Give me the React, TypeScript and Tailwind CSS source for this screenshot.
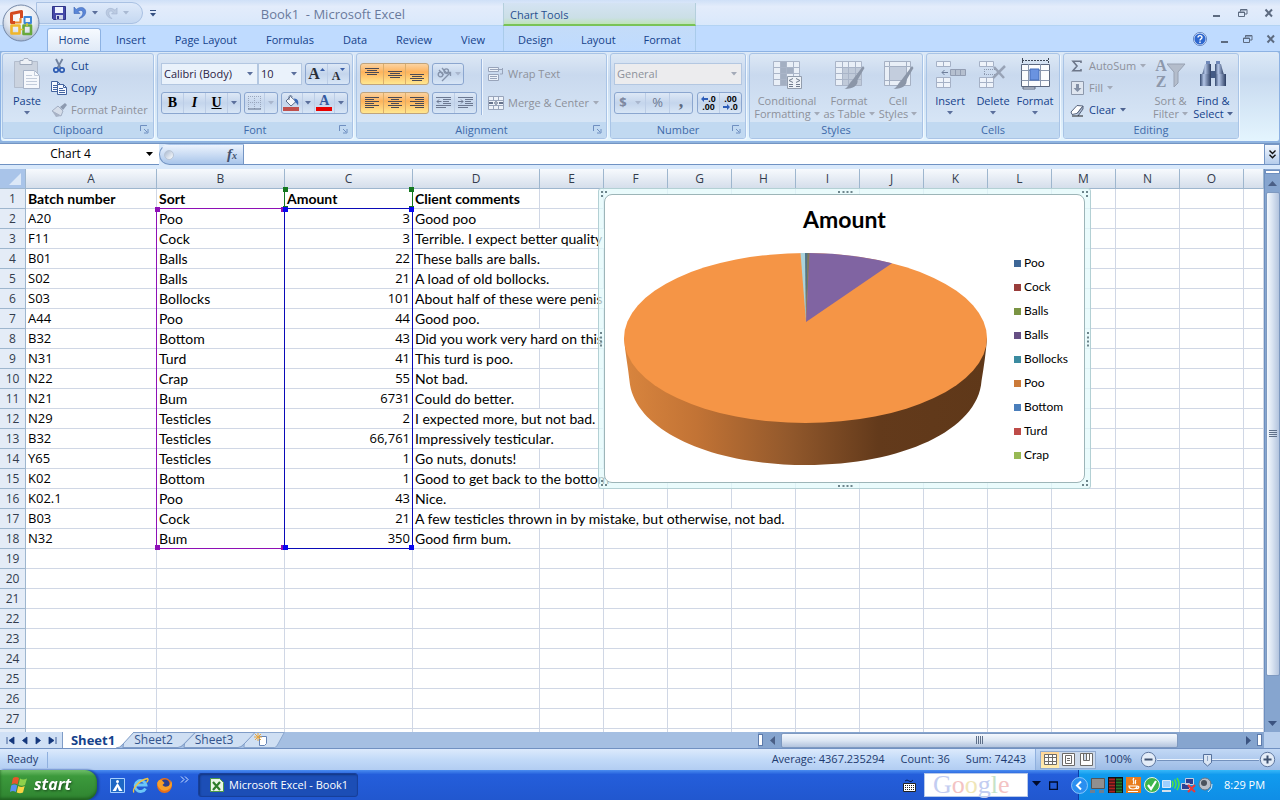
import type { ReactNode } from "react";

const ui = "font-['Open_Sans','Noto_Sans',sans-serif]";

const COLS = "ABCDEFGHIJKLMNO".split("");

type Row = [string, string, string, string, number];

// batch, sort, amount, comment, number of columns the comment spills over
const ROWS: Row[] = [
  ["A20", "Poo", "3", "Good poo", 1],
  ["F11", "Cock", "3", "Terrible. I expect better quality", 3],
  ["B01", "Balls", "22", "These balls are balls.", 2],
  ["S02", "Balls", "21", "A load of old bollocks.", 2],
  ["S03", "Bollocks", "101", "About half of these were penis", 3],
  ["A44", "Poo", "44", "Good poo.", 1],
  ["B32", "Bottom", "43", "Did you work very hard on this", 3],
  ["N31", "Turd", "41", "This turd is poo.", 1],
  ["N22", "Crap", "55", "Not bad.", 1],
  ["N21", "Bum", "6731", "Could do better.", 1],
  ["N29", "Testicles", "2", "I expected more, but not bad.", 2],
  ["B32", "Testicles", "66,761", "Impressively testicular.", 2],
  ["Y65", "Testicles", "1", "Go nuts, donuts!", 1],
  ["K02", "Bottom", "1", "Good to get back to the bottom", 3],
  ["K02.1", "Poo", "43", "Nice.", 1],
  ["B03", "Cock", "21", "A few testicles thrown in by mistake, but otherwise, not bad.", 5],
  ["N32", "Bum", "350", "Good firm bum.", 1],
];

const LEGEND: [string, string][] = [
  ["Poo", "bg-[#3d6696]"],
  ["Cock", "bg-[#993d3b]"],
  ["Balls", "bg-[#7a9443]"],
  ["Balls", "bg-[#664f84]"],
  ["Bollocks", "bg-[#3b8ba0]"],
  ["Poo", "bg-[#cb7a38]"],
  ["Bottom", "bg-[#4a7ebb]"],
  ["Turd", "bg-[#be4b48]"],
  ["Crap", "bg-[#98b954]"],
];

function Arrow({ className = "text-[#5b6f9c]" }: { className?: string }) {
  return (
    <svg width="6" height="4" viewBox="0 0 6 4" className={"shrink-0 " + className}>
      <path d="M0 0h6L3 3.6z" fill="currentColor" />
    </svg>
  );
}

function Launcher() {
  return (
    <button aria-label="More options" className="absolute right-1 top-[3px]">
      <svg width="9" height="9" viewBox="0 0 9 9" fill="none" stroke="#6f8fc0">
        <path d="M.5 6V.5H7M4 4l3 3M8 4v4H4" />
      </svg>
    </button>
  );
}

function Group({ title, width, launcher, children }: { title: string; width: string; launcher?: boolean; children: ReactNode }) {
  return (
    <section
      className={
        "flex h-[86px] shrink-0 flex-col overflow-hidden rounded-[3px] border border-[#a9c4e6] bg-linear-to-b from-[#dde8f5] via-[#c9d9ee] via-25% to-[#dbe9f8] shadow-[1px_1px_0_#f1f8ff] " +
        width
      }
    >
      <div className="flex min-h-0 flex-1">{children}</div>
      <div className="relative h-4 bg-[#c1d9f1] text-center leading-4 text-[#3e6aaa]">
        {title}
        {launcher && <Launcher />}
      </div>
    </section>
  );
}

function Big({ icon, lines, off, arrow, width }: { icon: ReactNode; lines: [string, string?]; off?: boolean; arrow?: boolean; width: string }) {
  return (
    <button className={"flex shrink-0 flex-col items-center whitespace-nowrap pt-1 leading-[13px] " + width + (off ? " text-[#8d919b]" : " text-[#15428b]")}>
      <span className="flex h-9 items-start">{icon}</span>
      <span>{lines[0]}</span>
      {lines[1] ? (
        <span className="flex items-center gap-[3px]">
          {lines[1]}
          <Arrow className={off ? "text-[#a3aab8]" : "text-[#4e6391]"} />
        </span>
      ) : (
        arrow && <span className="pt-1"><Arrow /></span>
      )}
    </button>
  );
}

function Small({ icon, text, off, arrow }: { icon: ReactNode; text: string; off?: boolean; arrow?: boolean }) {
  return (
    <button className={"flex h-[22px] items-center gap-1 whitespace-nowrap " + (off ? "text-[#8d919b]" : "text-[#15428b]")}>
      <span className="flex w-4 justify-center">{icon}</span>
      {text}
      {arrow && <Arrow className={off ? "text-[#a3aab8]" : "text-[#4e6391]"} />}
    </button>
  );
}

function Bar({ children, orange, width }: { children: ReactNode; orange?: boolean; width: string }) {
  return (
    <div
      className={
        "flex h-[22px] shrink-0 divide-x rounded-[3px] border " +
        width +
        (orange
          ? " divide-[#dcae6a] border-[#c0a47c] bg-linear-to-b from-[#fbd3a0] via-[#fdb35c] via-40% to-[#ffe78f]"
          : " divide-[#bccde6] border-[#8ba6cf] bg-linear-to-b from-[#dde8f6] via-[#c4d5ec] via-50% to-[#d8e6f6]")
      }
    >
      {children}
    </div>
  );
}

function Cell({ label, children, className = "flex-1" }: { label: string; children: ReactNode; className?: string }) {
  return (
    <button aria-label={label} className={"flex items-center justify-center " + className}>
      {children}
    </button>
  );
}

function Lines({ d, color = "#4a4a55" }: { d: string; color?: string }) {
  return (
    <svg width="16" height="16" viewBox="0 0 16 16" stroke={color} fill="none">
      <path d={d} />
    </svg>
  );
}

const ALIGN: [string, string][] = [
  ["Top align", "M1 2.5h14M3 4.5h10M1 6.5h14M3 8.5h10"],
  ["Middle align", "M1 5.5h14M3 7.5h10M1 9.5h14M3 11.5h10"],
  ["Bottom align", "M1 8.5h14M3 10.5h10M1 12.5h14M3 14.5h10"],
];
const HALIGN: [string, string][] = [
  ["Align left", "M1 2.5h14M1 4.5h9M1 6.5h14M1 8.5h9M1 10.5h14M1 12.5h9"],
  ["Center", "M1 2.5h14M4 4.5h8M1 6.5h14M4 8.5h8M1 10.5h14M4 12.5h8"],
  ["Align right", "M1 2.5h14M6 4.5h9M1 6.5h14M6 8.5h9M1 10.5h14M6 12.5h9"],
];

function OfficeLogo() {
  return (
    <svg width="38" height="38" viewBox="0 0 38 38">
      <defs>
        <radialGradient id="orb" cx="50%" cy="30%" r="70%">
          <stop offset="0" stopColor="#ffffff" />
          <stop offset=".6" stopColor="#e4e9f1" />
          <stop offset="1" stopColor="#a9b8cf" />
        </radialGradient>
      </defs>
      <circle cx="19" cy="19" r="18" fill="url(#orb)" stroke="#7488a8" />
      <g fill="none" strokeWidth="2.6" strokeLinejoin="round">
        <path d="M13 18.500H9.500V9.500L19.500 7.500V14" stroke="#d4491f" strokeWidth="3" />
        <path d="M13 18.500h5.500V14" stroke="#ee8b2a" strokeWidth="2.200" />
        <path d="M22.500 13h6.500v6h-6.500z" stroke="#3f86d6" strokeWidth="2" />
        <path d="M9.500 21.500h8v8h-8z" stroke="#f0b62b" strokeWidth="2.600" />
        <path d="M21.500 21.500h7.500v8.500h-7.500z" stroke="#67a83c" strokeWidth="2.600" />
        <path d="M17.500 25.500h4M25 19v3" stroke="#d8c23b" strokeWidth="1.600" />
      </g>
    </svg>
  );
}

function WinButtons({ help }: { help?: boolean }) {
  return (
    <div className={"ml-auto flex items-center text-[#5d6b80] " + (help ? "gap-[13px] self-center pr-1" : "gap-[16px] pr-[6px]")}>
      {help && (
        <button aria-label="Help">
          <svg width="14" height="14" viewBox="0 0 14 14">
            <circle cx="7" cy="7" r="6.300" fill="#2f68cf" stroke="#dbe8fb" strokeWidth="1.400" />
            <circle cx="7" cy="7" r="6.600" fill="none" stroke="#3b64ad" strokeWidth=".7" />
            <path d="M5 5.500c0-2.500 4-2.500 4 0C9 7 7 6.800 7 8.400M7 9.600v1.300" stroke="#fff" strokeWidth="1.400" fill="none" />
          </svg>
        </button>
      )}
      <button aria-label="Minimize">
        <svg width="10" height="10" viewBox="0 0 10 10"><path d="M1 8h7" stroke="currentColor" strokeWidth="2" /></svg>
      </button>
      <button aria-label="Restore">
        <svg width="10" height="10" viewBox="0 0 10 10" fill="none" stroke="currentColor">
          <path d="M.5 4h6v4.500h-6zM2.500 3.500v-2h6.500v4.500H7M.5 4.500h6M2.500 2h6" />
        </svg>
      </button>
      <button aria-label="Close">
        <svg width="10" height="10" viewBox="0 0 10 10"><path d="M1.500 1.500l6.500 7M8 1.500l-6.500 7" stroke="currentColor" strokeWidth="2" /></svg>
      </button>
    </div>
  );
}

function TitleBar() {
  return (
    <header className="relative flex h-[26px] shrink-0 bg-linear-to-b from-[#cfe0f7] via-[#e3ecfb] via-25% to-[#d9e8fb] shadow-[inset_0_-1px_0_#b3d3f3]">
      <div className="flex w-[503px] shrink-0 items-center">
        <div className="ml-9 flex h-[22px] w-[107px] items-center gap-[7px] rounded-r-full border border-[#a9c1e3] bg-linear-to-b from-[#dfeafa] to-[#c5d8f1] pl-[15px]">
          <button aria-label="Save">
            <svg width="14" height="14" viewBox="0 0 14 14">
              <path d="M.5.5h13v13h-12l-1-1z" fill="#4549a8" stroke="#2f3488" />
              <path d="M3 1h8v6H3z" fill="#eef3ff" />
              <path d="M4 9h7v4.500H4z" fill="#cfd6ea" />
              <path d="M5 10h2v3H5z" fill="#2f3488" />
            </svg>
          </button>
          <button aria-label="Undo" className="flex items-center gap-[5px]">
            <svg width="14" height="14" viewBox="0 0 14 14">
              <path d="M1 1v6.500h6L5 5.500c3-2.500 6-.5 4.500 3-.5 1.500-2 2.800-3.500 4 4.500-.8 7.500-4.500 6.500-8C11.500.8 6.500.5 3.200 3.500z" fill="#5a86d8" stroke="#3c64b4" strokeWidth=".6" />
            </svg>
            <Arrow />
          </button>
          <button aria-label="Redo" className="flex items-center gap-[5px]">
            <svg width="13" height="13" viewBox="0 0 14 14">
              <path d="M13 1v6.500H7L9 5.500c-3-2.500-6-.5-4.500 3 .5 1.500 1.500 2.800 3 4C3 11.700.5 8 1.500 4.500 2.500.8 7.500.5 10.800 3.500z" fill="#bccbe2" stroke="#9fb2cf" strokeWidth=".6" />
            </svg>
            <Arrow className="text-[#a9b9d2]" />
          </button>
        </div>
        <button aria-label="Customize Quick Access Toolbar" className="ml-[7px]">
          <svg width="6" height="7" viewBox="0 0 6 7"><path d="M0 .5h6" stroke="#344f80" /><path d="M0 3h6L3 6.500z" fill="#344f80" /></svg>
        </button>
        <h1 className="ml-auto mr-[98px] mt-1 text-[13px] text-[#6a7a9c]">Book1&nbsp; - Microsoft Excel</h1>
      </div>
      <div className="mt-[3px] w-[193px] shrink-0 border-x border-b-2 border-x-[#b4cfdc] border-b-[#79c356] bg-linear-to-b from-[#d4e3f3] via-[#cbdfe6] via-70% to-[#bfe3b8] pl-[6px] pt-1 text-[#27508f]">
        Chart Tools
      </div>
      <WinButtons />
      <button aria-label="Office Button" className="absolute left-[2px] top-1 z-10"><OfficeLogo /></button>
    </header>
  );
}

function Tabs() {
  const tab = "flex h-[22px] items-center whitespace-nowrap px-[14px] text-[#15428b]";
  return (
    <nav className="flex h-[25px] shrink-0 items-end bg-[#bfdbff]">
      <div className="flex w-[503px] shrink-0 items-end gap-px pl-[47px]">
        <button className="flex h-[23px] w-[54px] items-center justify-center rounded-t-[3px] border border-b-0 border-[#8db2e3] bg-linear-to-b from-[#f6faff] to-[#e0eaf7] text-[#15428b]">Home</button>
        {["Insert", "Page Layout", "Formulas", "Data", "Review", "View"].map((t) => (
          <button key={t} className={tab}>{t}</button>
        ))}
      </div>
      <div className="flex h-full w-[193px] shrink-0 items-end border-x border-[#a9cbea] bg-linear-to-b from-[#c4dcf8] to-[#bfdbff]">
        {["Design", "Layout", "Format"].map((t) => (
          <button key={t} className={tab}>{t}</button>
        ))}
      </div>
      <WinButtons help />
    </nav>
  );
}

function Combo({ label, value, width, off }: { label: string; value: string; width: string; off?: boolean }) {
  return (
    <label className={"relative flex h-[22px] shrink-0 " + width}>
      <select
        aria-label={label}
        className={"w-full appearance-none rounded-none border border-[#b3c7e1] pl-[2px] " + (off ? "bg-[#ececee] text-[#8d919b]" : "bg-[#eaf2fb] text-[#2a2344]")}
      >
        <option>{value}</option>
      </select>
      <span className="pointer-events-none absolute right-[5px] top-[9px]"><Arrow className={off ? "text-[#a3aab8]" : "text-[#5b6f9c]"} /></span>
    </label>
  );
}

function TableIcon({ kind }: { kind: "cond" | "table" | "style" }) {
  return (
    <svg width="32" height="32" viewBox="0 0 32 32">
      {kind === "style" ? (
        <g>
          <path d="M2.500 3.500h26v24h-26z" fill="#e9eff7" stroke="#a5b0c3" />
          <path d="M7.500 8.500h17v14h-17z" fill="#c3cddd" stroke="#a5b0c3" />
          <path d="M7.500 3v5M24.500 3v5M7.500 22v5M2 8.500h5M2 22.500h5M24 8.500h5" stroke="#a5b0c3" />
        </g>
      ) : (
        <g>
          <path d="M2.500 3.500h26v24h-26z" fill="#e9eff7" />
          <path d={kind === "cond" ? "M9 3h6v24H9zM15 9h7v6h-7z" : "M9 9h20v19H9z"} fill={kind === "cond" ? "#a3afc2" : "#c0cad9"} />
          <path d="M2.500 3.500h26v24h-26zM2.500 9.500h26M2.500 15.500h26M2.500 21.500h26M9.500 3.500v24M15.500 3.500v24M22.500 3.500v24" stroke="#aab5c8" fill="none" />
        </g>
      )}
      {kind === "cond" ? (
        <g>
          <path d="M16.500 18.500h14v12h-14z" fill="#eef2f7" stroke="#929dad" />
          <path d="M22 20.500l-4 2 4 2M18 26.500h4M18 28.500h4M25 20.500l4 2-4 2M25 26.500h4M25 28.500h4" stroke="#707b8c" fill="none" />
        </g>
      ) : (
        <path d="M30 8l1.500 2-7 12c1 5-4 9-13 9 4-2 4-5 8-9z" fill="#8b96a8" />
      )}
    </svg>
  );
}

function CellsIcon({ kind }: { kind: "insert" | "delete" | "format" }) {
  if (kind === "format")
    return (
      <svg width="32" height="32" viewBox="0 0 32 32">
        <path d="M3 2.500h26M3.500 0v5M29.500 0v5" stroke="#3d4656" strokeDasharray="2 1" />
        <path d="M2.500 6.500h28v22h-28z" fill="#fbfcfe" stroke="#5c6880" />
        <path d="M2.500 12.500h28M2.500 22.500h28M9.500 6v22M21.500 6v22" stroke="#8a97ae" />
        <path d="M11 11h9v11h-9z" fill="#6a93e0" stroke="#456db8" />
        <path d="M4 29h12v2H4z" fill="#dfe5ef" stroke="#5c6880" />
      </svg>
    );
  return (
    <svg width="32" height="32" viewBox="0 0 32 32">
      <path d="M2.500 3.500h14v5h-14zM9.500 3.500v5M2.500 19.500h14v10h-14zM9.500 19.500v10M2.500 24.500h14" fill="#eef3fa" stroke="#a5b1c6" />
      {kind === "insert" ? (
        <g>
          <path d="M16.500 11.500h15v6h-15zM21.500 11.500v6M26.500 11.500v6" fill="#b5bfcf" stroke="#929db2" />
          <path d="M14 14.500H8M10.500 12L8 14.500l2.500 2.500" stroke="#6f7f9b" fill="none" />
        </g>
      ) : (
        <g>
          <path d="M7 11.500h14M7 16.500h14M7.500 11v6" stroke="#8c98ae" strokeDasharray="1 1" />
          <path d="M17 9l10 11M28 8L16 20" stroke="#98a3b6" strokeWidth="2.500" />
        </g>
      )}
    </svg>
  );
}

function Ribbon() {
  return (
    <div className="h-[92px] shrink-0 bg-[#8fb4dd] pb-px">
      <div className="flex h-[91px] gap-[3px] overflow-hidden rounded-[3px] border border-[#8db2e3] bg-linear-to-b from-[#dce9f7] via-[#c9dbf0] via-30% to-[#e4f5fe] pl-px pt-px">
        <Group title="Clipboard" width="w-[152px]" launcher>
          <Big
            width="w-12"
            arrow
            lines={["Paste"]}
            icon={
              <svg width="28" height="32" viewBox="0 0 28 32">
                <path d="M1.500 3.500h23v26h-23z" fill="#cbd3df" stroke="#b3bdcd" />
                <path d="M7 2.500h3c0-3 6-3 6 0h3v4H7z" fill="#eef1f6" stroke="#9faabc" />
                <path d="M10.500 12.500h11l5 5v13h-16z" fill="#f6f8fc" stroke="#a7b3c8" />
                <path d="M21.500 12.500v5h5M13 17.500h6M13 20.500h11M13 23.500h11M13 26.500h11" stroke="#c3ccdb" fill="none" />
              </svg>
            }
          />
          <div className="flex flex-col pt-px">
            <Small
              text="Cut"
              icon={
                <svg width="14" height="16" viewBox="0 0 14 16" fill="none">
                  <path d="M4 1l4.500 9M10.500 1L5.500 10" stroke="#72839f" strokeWidth="1.800" />
                  <circle cx="4" cy="12" r="2.200" stroke="#2f5db3" strokeWidth="1.700" />
                  <circle cx="10" cy="12" r="2.200" stroke="#2f5db3" strokeWidth="1.700" />
                </svg>
              }
            />
            <Small
              text="Copy"
              icon={
                <svg width="16" height="14" viewBox="0 0 16 14" stroke="#43639f">
                  <path d="M.5.5h6l3 3v7h-9zM6.500.5v3h3M2 4.500h4M2 6.500h4M2 8.500h4" fill="#f5f9ff" />
                  <path d="M6.500 3.500h6l3 3v7h-9z" fill="#f5f9ff" />
                  <path d="M12.500 3.500v3h3M8 7.500h4M8 9.500h6M8 11.500h6" fill="none" />
                </svg>
              }
            />
            <Small
              off
              text="Format Painter"
              icon={
                <svg width="16" height="14" viewBox="0 0 16 14">
                  <path d="M14 0l2 2-4 5-3-3z" fill="#8d9ab0" />
                  <path d="M7 3l5 5-2 5L1 8z" fill="#d5dde9" stroke="#a2aec2" />
                  <path d="M1 8l9 5-5 1z" fill="#a7b2c5" />
                </svg>
              }
            />
          </div>
        </Group>

        <Group title="Font" width="w-[196px]" launcher>
          <div className="flex flex-col gap-[7px] pl-[3px] pt-[9px]">
            <div className="flex">
              <Combo label="Font" value="Calibri (Body)" width="w-[97px]" />
              <Combo label="Font size" value="10" width="w-[44px]" />
              <div className="w-[3px]" />
              <Bar width="w-[45px]">
                <Cell label="Grow font"><span className="font-['Liberation_Serif',serif] text-base font-bold leading-4 text-[#2b2f38]">A</span><svg width="5" height="12" viewBox="0 0 5 12"><path d="M0 3h5L2.500 0z" fill="#3c60a8" /></svg></Cell>
                <Cell label="Shrink font"><span className="pt-1 font-['Liberation_Serif',serif] text-xs font-bold leading-3 text-[#2b2f38]">A</span><svg width="5" height="12" viewBox="0 0 5 12"><path d="M0 0h5L2.500 3z" fill="#3c60a8" /></svg></Cell>
              </Bar>
            </div>
            <div className="flex gap-[3px]">
              <Bar width="w-20">
                <Cell label="Bold"><span className="font-['Liberation_Serif',serif] text-sm font-black text-black">B</span></Cell>
                <Cell label="Italic"><span className="font-['Liberation_Serif',serif] text-sm font-bold italic text-black">I</span></Cell>
                <Cell label="Underline"><span className="font-['Liberation_Serif',serif] text-sm font-bold text-black underline">U</span></Cell>
                <Cell label="Underline options" className="w-3"><Arrow /></Cell>
              </Bar>
              <Bar width="w-[34px]">
                <Cell label="Borders">
                  <svg width="14" height="14" viewBox="0 0 14 14"><path d="M.5 0v13M6.500 0v13M12.500 0v13M0 .5h13M0 6.500h13" stroke="#9aa7bd" strokeDasharray="1 1" /><path d="M0 13h13" stroke="#5f6d86" /></svg>
                </Cell>
                <Cell label="Border options" className="w-3"><Arrow className="text-[#a9b6cd]" /></Cell>
              </Bar>
              <Bar width="w-[67px]">
                <Cell label="Fill color">
                  <svg width="17" height="16" viewBox="0 0 17 16"><path d="M0 12h16v4H0z" fill="#c0504d" /><path d="M7.500 1.500l5.500 5-5 4.500-5-5z" fill="#f4f7fb" stroke="#5f6f8c" /><path d="M6 5V2c0-2 3-2 3 0" stroke="#5f6f8c" fill="none" /><path d="M11 3.500c4 0 5 3 4 7-1-2-2-3-3-3.500z" fill="#3a68b8" /></svg>
                </Cell>
                <Cell label="Fill options" className="w-3"><Arrow /></Cell>
                <Cell label="Font color" className="flex-1 flex-col">
                  <span className="font-['Liberation_Serif',serif] text-sm font-bold leading-3 text-[#33599f]">A</span>
                  <span className="h-1 w-4 bg-[#e80000]" />
                </Cell>
                <Cell label="Font color options" className="w-3"><Arrow /></Cell>
              </Bar>
            </div>
          </div>
        </Group>

        <Group title="Alignment" width="w-[251px]" launcher>
          <div className="flex flex-col gap-[7px] pl-[3px] pt-[9px]">
            <div className="flex gap-[3px]">
              <Bar orange width="w-[69px]">
                {ALIGN.map(([l, d]) => <Cell key={l} label={l}><Lines d={d} /></Cell>)}
              </Bar>
              <Bar width="w-8">
                <Cell label="Orientation" className="flex-1 gap-[2px]">
                  <svg width="17" height="16" viewBox="0 0 17 16" stroke="#8492aa" fill="none" strokeWidth="1.300"><circle cx="4.500" cy="8.500" r="2.300" /><path d="M3 4l4.500 5M6 2l5.500 6" /><circle cx="10.300" cy="5" r="2.200" /><path d="M6 15l8-8M14.500 10V6.500H11" /></svg>
                  <Arrow className="text-[#a9b6cd]" />
                </Cell>
              </Bar>
            </div>
            <div className="flex gap-[3px]">
              <Bar orange width="w-[69px]">
                {HALIGN.map(([l, d]) => <Cell key={l} label={l}><Lines d={d} /></Cell>)}
              </Bar>
              <Bar width="w-[45px]">
                <Cell label="Decrease indent"><Lines color="#6c7891" d="M0 2.500h15M7 4.500h8M7 6.500h6M7 8.500h8M0 10.500h15M0 12.500h10M5.500 6.500H1M3 4.500l-2 2 2 2" /></Cell>
                <Cell label="Increase indent"><Lines color="#6c7891" d="M0 2.500h15M7 4.500h8M7 6.500h6M7 8.500h8M0 10.500h15M0 12.500h10M0 6.500h5M3 4.500l2 2-2 2" /></Cell>
              </Bar>
            </div>
          </div>
          <div className="ml-1 mt-[5px] h-14 w-px bg-[#9ab5dc] shadow-[1px_0_0_#eef5fd]" />
          <div className="flex flex-col gap-[7px] pl-[6px] pt-[9px]">
            <Small off text="Wrap Text" icon={<svg width="16" height="16" viewBox="0 0 16 16" stroke="#98a4ba" fill="none"><path d="M.5 1.500h10v4H.5zM.5 8.500h10v6H.5z" fill="#edf2f9" /><path d="M2 3.500h12M2 10.500h7M2 12.500h7M14.500 2v6H12" /></svg>} />
            <Small off arrow text="Merge & Center" icon={<svg width="16" height="16" viewBox="0 0 16 16" stroke="#98a4ba" fill="none"><path d="M.5 1.500h15v13H.5zM.5 5.500h15M.5 10.500h15M5.500 1.500v4M10.500 1.500v4M5.500 10.500v4M10.500 10.500v4" fill="#edf2f9" /><path d="M1 8h4M11 8h4" stroke="#66738c" strokeWidth="2" /><circle cx="8" cy="8" r="1.300" stroke="#66738c" /></svg>} />
          </div>
        </Group>

        <Group title="Number" width="w-[136px]" launcher>
          <div className="flex flex-col gap-[7px] pl-[3px] pt-[9px]">
            <Combo off label="Number format" value="General" width="w-[128px]" />
            <div className="flex gap-1">
              <Bar width="w-[79px]">
                <Cell label="Accounting format" className="flex-1 gap-2"><span className="text-[13px] font-bold text-[#7d88a0]">$</span><Arrow className="text-[#a9b6cd]" /></Cell>
                <Cell label="Percent" className="w-6"><span className="text-[13px] text-[#6d7890]">%</span></Cell>
                <Cell label="Comma" className="w-[22px]"><span className="pb-1 font-['Liberation_Serif',serif] text-lg font-bold leading-3 text-[#5e6980]">,</span></Cell>
              </Bar>
              <Bar width="w-[45px]">
                <Cell label="Increase decimal" className="flex-1 flex-col font-['Liberation_Sans',sans-serif] text-[9px] font-bold leading-[8px] text-black"><span className="flex items-center"><svg width="7" height="6" viewBox="0 0 7 6"><path d="M0 3l3-3v2h4v2H3v2z" fill="#2c5cb8" /></svg>.0</span><span>.00</span></Cell>
                <Cell label="Decrease decimal" className="flex-1 flex-col font-['Liberation_Sans',sans-serif] text-[9px] font-bold leading-[8px] text-black"><span>.00</span><span className="flex items-center"><svg width="7" height="6" viewBox="0 0 7 6"><path d="M7 3L4 0v2H0v2h4v2z" fill="#2c5cb8" /></svg>.0</span></Cell>
              </Bar>
            </div>
          </div>
        </Group>

        <Group title="Styles" width="w-[174px]">
          <Big off width="w-[74px]" lines={["Conditional", "Formatting"]} icon={<TableIcon kind="cond" />} />
          <Big off width="w-[50px]" lines={["Format", "as Table"]} icon={<TableIcon kind="table" />} />
          <Big off width="w-[48px]" lines={["Cell", "Styles"]} icon={<TableIcon kind="style" />} />
        </Group>

        <Group title="Cells" width="w-[134px]">
          <Big width="w-[46px]" arrow lines={["Insert"]} icon={<CellsIcon kind="insert" />} />
          <Big width="w-[40px]" arrow lines={["Delete"]} icon={<CellsIcon kind="delete" />} />
          <Big width="w-[44px]" arrow lines={["Format"]} icon={<CellsIcon kind="format" />} />
        </Group>

        <Group title="Editing" width="w-[176px]">
          <div className="flex w-[84px] flex-col pl-[5px] pt-px">
            <Small off arrow text="AutoSum" icon={<svg width="12" height="12" viewBox="0 0 12 12" fill="none" stroke="#6c7689" strokeWidth="1.600"><path d="M10 3V1.300H2L6 6l-4 4.700h8V9" /></svg>} />
            <Small off arrow text="Fill" icon={<svg width="13" height="14" viewBox="0 0 13 14"><path d="M.5.5h12v13H.5z" fill="#dfe6f0" stroke="#8c98ac" /><path d="M5 3h3v4h2.500l-4 4-4-4H5z" fill="#8390a6" /></svg>} />
            <Small arrow text="Clear" icon={<svg width="15" height="13" viewBox="0 0 15 13"><path d="M1 8l6-6.500 6 .5-6 7.500-5 1z" fill="#fff" stroke="#56637c" /><path d="M7 9.500L13 2v3l-5 7" fill="#aebbd0" stroke="#56637c" /><path d="M2 12h11" stroke="#222" /></svg>} />
          </div>
          <Big
            off
            width="w-[45px]"
            lines={["Sort &", "Filter"]}
            icon={
              <span className="flex">
                <span className="flex flex-col font-['Liberation_Serif',serif] text-base font-bold leading-4 text-[#8d98ab]">
                  <span>A</span>
                  <span>Z</span>
                </span>
                <svg width="19" height="32" viewBox="0 0 19 32">
                  <path d="M0 6h18l-7 8v11l-4 4V14z" fill="#b4bdcb" stroke="#98a2b3" />
                </svg>
              </span>
            }
          />
          <Big
            width="w-[40px]"
            lines={["Find &", "Select"]}
            icon={
              <svg width="30" height="32" viewBox="0 0 30 32">
                <defs>
                  <linearGradient id="bino" x1="0" x2="1"><stop offset="0" stopColor="#34496f" /><stop offset=".35" stopColor="#b3c5e6" /><stop offset="1" stopColor="#2b3d61" /></linearGradient>
                </defs>
                <path d="M7 6h6v11H4l2-7z" fill="url(#bino)" />
                <path d="M17 6h6l1 4 2 7h-9z" fill="url(#bino)" />
                <path d="M2 16h11v12H2z" fill="url(#bino)" />
                <path d="M17 16h11v12H17z" fill="url(#bino)" />
                <path d="M13 13h4v7h-4z" fill="#435a84" />
                <path d="M8 3h4v3H8zM18 3h4v3h-4z" fill="#6f88b8" />
              </svg>
            }
          />
        </Group>
      </div>
    </div>
  );
}

function FormulaBar() {
  return (
    <div className="flex h-[26px] shrink-0 border-t border-[#7495c4] bg-[#d9e9fb] pb-1">
      <div className="flex w-[159px] shrink-0 items-center border-b border-[#6f92c3] bg-white">
        <input aria-label="Name box" defaultValue="Chart 4" className="w-[141px] bg-transparent text-center text-xs text-black outline-none" />
        <button aria-label="Name list" className="flex w-4 justify-center"><svg width="7" height="4" viewBox="0 0 7 4"><path d="M0 0h7L3.500 4z" fill="#000" /></svg></button>
      </div>
      <div className="flex w-[85px] shrink-0 items-center justify-between rounded-l-full border border-[#7495c4] border-t-transparent bg-linear-to-b from-[#edf4fd] to-[#a9c5ea] pl-1 pr-[6px]">
        <span className="size-[10px] rounded-full border border-[#b9c5d6] bg-linear-to-br from-[#a9b9d0] to-white" />
        <button aria-label="Insert function" className="font-['Liberation_Serif',serif] text-[15px] font-bold italic leading-4 text-[#44536f]">f<span className="text-[10px]">x</span></button>
      </div>
      <input aria-label="Formula" className="min-w-0 flex-1 border-b border-[#6f92c3] bg-white outline-none" />
      <button aria-label="Expand formula bar" className="flex w-4 items-center justify-center border border-[#7495c4] bg-linear-to-b from-[#f2f7fe] to-[#b5cdec]">
        <svg width="7" height="9" viewBox="0 0 7 9" fill="none" stroke="#111" strokeWidth="1.400"><path d="M.5.500l3 3 3-3M.5 4.700l3 3 3-3" /></svg>
      </button>
    </div>
  );
}

function Pie() {
  return (
    <svg width="372" height="220" viewBox="620 250 372 220" className="shrink-0">
      <defs>
        <linearGradient id="side" gradientUnits="userSpaceOnUse" x1="624" x2="987" y1="0" y2="0">
          <stop offset="0" stopColor="#d9853e" />
          <stop offset=".2" stopColor="#c27335" />
          <stop offset=".45" stopColor="#93592c" />
          <stop offset=".7" stopColor="#633a1b" />
          <stop offset="1" stopColor="#5f3819" />
        </linearGradient>
      </defs>
      <path d="M624 338 C625 352 628 366 629.500 381 C634 430 710 465 806 465 C902 465 978 430 981.500 381 C984 366 986 352 987 338z" fill="url(#side)" />
      <ellipse cx="805.5" cy="338" rx="181.500" ry="85" fill="#f59546" />
      <path d="M806 322L800.500 253H805.500z" fill="#a9d3dc" />
      <path d="M806 322L805 253H808z" fill="#4f7488" />
      <path d="M806 322L807.500 253H810z" fill="#7c7a5c" />
      <path d="M806 322L809.500 253A181.500 85 0 0 1 892 263.200z" fill="#8064a2" />
    </svg>
  );
}

function Dots({ className }: { className: string }) {
  return <span className={"absolute border-dotted border-[#6d858c] " + className} />;
}

function Chart() {
  return (
    <figure className="absolute left-[598px] top-[19px] h-[301px] w-[493px] rounded-[3px] border border-[#b3d0d4] bg-[#e3fafb]/75 p-[5px]">
      <div className="flex h-full flex-col rounded-lg border border-[#9db5b8] bg-white font-['Lato','Noto_Sans',sans-serif] text-black">
        <figcaption className="pt-2 text-center text-[23px] font-bold leading-8">Amount</figcaption>
        <div className="flex pl-[15px] pt-[15px]">
          <Pie />
          <ul className="flex flex-col pl-[22px] pt-px text-xs leading-6">
            {LEGEND.map(([name, color], i) => (
              <li key={i} className="flex items-center gap-[3px]">
                <span className={"size-[7px] " + color} />
                {name}
              </li>
            ))}
          </ul>
        </div>
      </div>
      <Dots className="left-1/2 top-[2px] w-[15px] -translate-x-1/2 border-t-2" />
      <Dots className="bottom-[1px] left-1/2 w-[15px] -translate-x-1/2 border-t-2" />
      <Dots className="left-[1px] top-1/2 h-[15px] -translate-y-1/2 border-l-2" />
      <Dots className="right-[1px] top-1/2 h-[15px] -translate-y-1/2 border-l-2" />
      <Dots className="left-[2px] top-[2px] size-[6px] border-l-2 border-t-2" />
      <Dots className="right-[2px] top-[2px] size-[6px] border-r-2 border-t-2" />
      <Dots className="bottom-[2px] left-[2px] size-[6px] border-b-2 border-l-2" />
      <Dots className="bottom-[2px] right-[2px] size-[6px] border-b-2 border-r-2" />
    </figure>
  );
}

function RangeBox({ className, handle }: { className: string; handle: string }) {
  const h = "absolute size-[5px] " + handle;
  return (
    <div className={"pointer-events-none absolute " + className}>
      <span className={h + " -left-[2px] -top-[2px]"} />
      <span className={h + " -right-[2px] -top-[2px]"} />
      <span className={h + " -bottom-[2px] -left-[2px]"} />
      <span className={h + " -bottom-[2px] -right-[2px]"} />
    </div>
  );
}

function Sheet() {
  const td = "h-5 whitespace-nowrap border-b border-r border-[#d0d7e5] p-0 pl-[2px] leading-[19px]";
  const num = "font-['Open_Sans','Noto_Sans',sans-serif] text-[13px]";
  const rowHead = "h-5 border-b border-r border-[#9eb6ce] bg-[#e4ecf7] p-0 text-xs font-normal leading-[19px] text-[#333c4d] font-['Open_Sans','Noto_Sans',sans-serif]";
  const colHead = "h-5 border-b border-r border-[#9eb6ce] bg-linear-to-b from-[#f7fafd] to-[#d5deeb] p-0 text-xs font-normal leading-[19px] text-[#333c4d] font-['Open_Sans','Noto_Sans',sans-serif]";
  return (
    <main className="relative min-w-0 flex-1 overflow-hidden bg-white">
      <table className="w-full table-fixed border-separate border-spacing-0 font-['Lato','Noto_Sans',sans-serif] text-sm text-black">
        <colgroup>
          <col className="w-[26px]" />
          <col className="w-[131px]" />
          <col className="w-[128px]" />
          <col className="w-[128px]" />
          <col className="w-[127px]" />
          {COLS.slice(4).map((c) => <col key={c} className="w-16" />)}
          <col />
        </colgroup>
        <thead>
          <tr>
            <td className="h-5 border-b border-r border-[#9eb6ce] bg-[#a9c4e9] p-0">
              <svg width="25" height="19" viewBox="0 0 25 19" className="block"><path d="M21 4v12H9z" fill="#dce8f7" /></svg>
            </td>
            {COLS.map((c) => <th key={c} scope="col" className={colHead}>{c}</th>)}
            <td className={colHead} />
          </tr>
        </thead>
        <tbody>
          <tr>
            <th scope="row" className={rowHead}>1</th>
            {["Batch number", "Sort", "Amount", "Client comments"].map((c) => <td key={c} className={td + " font-bold"}>{c}</td>)}
            {COLS.slice(3).map((c) => <td key={c} className={td} />)}
          </tr>
          {ROWS.map(([a, b, c, d, span], i) => (
            <tr key={i}>
              <th scope="row" className={rowHead}>{i + 2}</th>
              <td className={td + " " + num}>{a}</td>
              <td className={td}>{b}</td>
              <td className={td + " pr-[2px] text-right " + num}>{c}</td>
              <td colSpan={span} className={td}>{d}</td>
              {COLS.slice(2 + span).map((k) => <td key={k} className={td} />)}
            </tr>
          ))}
          {Array.from({ length: 9 }, (_, i) => (
            <tr key={i}>
              <th scope="row" className={rowHead}>{i + 19}</th>
              {COLS.map((k) => <td key={k} className={td} />)}
              <td className={td} />
            </tr>
          ))}
          <tr>
            <td className={rowHead} />
            {COLS.map((k) => <td key={k} className={td} />)}
            <td className={td} />
          </tr>
        </tbody>
      </table>
      <RangeBox className="left-[284px] top-[20px] h-5 w-[129px] border-x border-[#14781f]" handle="bg-[#14781f]" />
      <RangeBox className="left-[156px] top-[39px] h-[341px] w-[129px] border border-[#8e10b6]" handle="bg-[#8e10b6]" />
      <RangeBox className="left-[284px] top-[39px] h-[341px] w-[129px] border border-[#0a0ab8]" handle="bg-[#0808f0]" />
      <Chart />
    </main>
  );
}

function VScroll() {
  return (
    <div className="flex w-4 shrink-0 flex-col items-center border-l border-[#6d8fbf] bg-[#86a5cf]">
      <span className="my-px h-1 w-full border border-[#6d8fbf] bg-white" />
      <button aria-label="Scroll up" className="flex h-[17px] w-full items-center justify-center"><svg width="9" height="5" viewBox="0 0 9 5"><path d="M0 5h9L4.500 0z" fill="#4a5f86" /></svg></button>
      <div className="flex h-[484px] w-[14px] items-center justify-center rounded-[2px] border border-[#7e99c0] bg-linear-to-r from-[#f4f8fd] via-[#dce6f3] via-40% to-[#b3c4de]">
        <svg width="8" height="8" viewBox="0 0 8 8" stroke="#5f7089"><path d="M0 .5h8M0 2.500h8M0 4.500h8M0 6.500h8" /></svg>
      </div>
      <button aria-label="Scroll down" className="mt-auto flex h-[18px] w-full items-center justify-center"><svg width="9" height="5" viewBox="0 0 9 5"><path d="M0 0h9L4.500 5z" fill="#3b5380" /></svg></button>
    </div>
  );
}

function SheetTab({ name, width }: { name: ReactNode; width: string }) {
  return (
    <button className={"relative flex h-full items-center justify-center text-xs text-[#33548d] " + width}>
      <svg className="absolute inset-0 h-full w-full overflow-visible" viewBox="0 0 60 16" preserveAspectRatio="none">
        <path d="M0 15.500H54Q57 15.500 60 12L71 .5H2z" fill="#cfdff3" stroke="#7f9cc7" />
      </svg>
      <span className="relative z-10 flex">{name}</span>
    </button>
  );
}

function SheetBar() {
  return (
    <div className="flex h-[17px] shrink-0 border-b border-[#7191c2] bg-[#a5bfe2]">
      <div className="flex w-[63px] items-center justify-around border-r border-[#7f9cc7] bg-[#d0e0f5] px-[3px]">
        {[
          ["First sheet", "M1 1v7M8 1v7L3 4.500z"],
          ["Previous sheet", "M7 1v7L2.500 4.500z"],
          ["Next sheet", "M2 1v7l4.500-3.500z"],
          ["Last sheet", "M8 1v7M1 1v7l5-3.500z"],
        ].map(([l, d]) => (
          <button key={l} aria-label={l}><svg width="9" height="9" viewBox="0 0 9 9"><path d={d} fill="#14377c" stroke="#14377c" strokeWidth=".8" /></svg></button>
        ))}
      </div>
      <div className="flex flex-row-reverse">
        <SheetTab
          width="w-[34px]"
          name={<svg width="14" height="14" viewBox="0 0 14 14"><path d="M5.500 3.500h7v7l-2 2h-5z" fill="#fff" stroke="#6684b6" /><path d="M4 0v8M0 4h8M1 1l6 6M7 1L1 7" stroke="#e9a63c" /></svg>}
        />
        <SheetTab width="w-[60px]" name="Sheet3" />
        <SheetTab width="w-[61px]" name="Sheet2" />
        <button className="relative flex w-[60px] items-center justify-center text-[13px] font-bold leading-4 text-[#15428b]">
          <svg className="absolute inset-0 h-full w-full overflow-visible" viewBox="0 0 60 16" preserveAspectRatio="none"><path d="M0 0H71L60 12Q57 16 53 16H0z" fill="#fff" /><path d="M71 0L60 12Q57 16 53 16" fill="none" stroke="#7f9cc7" /></svg>
          <span className="relative z-10">Sheet1</span>
        </button>
      </div>
      <div className="ml-auto flex w-[506px] shrink-0 items-center bg-[#86a5cf]">
        <span className="h-3 w-[5px] border border-[#5d7bab] bg-white" />
        <button aria-label="Scroll left" className="flex w-[18px] justify-center"><svg width="5" height="9" viewBox="0 0 5 9"><path d="M5 0v9L0 4.500z" fill="#4a5f86" /></svg></button>
        <div className="flex h-[15px] w-[397px] items-center justify-center rounded-[2px] border border-[#7e99c0] bg-linear-to-b from-[#f4f8fd] via-[#dce6f3] via-50% to-[#b3c4de]">
          <svg width="8" height="8" viewBox="0 0 8 8" stroke="#5f7089"><path d="M.5 0v8M2.500 0v8M4.500 0v8M6.500 0v8" /></svg>
        </div>
        <button aria-label="Scroll right" className="ml-auto flex w-[18px] justify-center"><svg width="5" height="9" viewBox="0 0 5 9"><path d="M0 0v9l5-4.500z" fill="#3b5380" /></svg></button>
        <span className="mr-[2px] h-3 w-[5px] border border-[#5d7bab] bg-white" />
      </div>
      <div className="w-4 shrink-0 bg-[#b8cfed]" />
    </div>
  );
}

function StatusBar() {
  const views: [string, string, string][] = [
    ["Normal view", "bg-linear-to-b from-[#ffd698] to-[#ffedb0]", "M.5 1.500h12v10H.5zM.5 4.500h12M.5 8.500h12M4.500 1.500v10M8.500 1.500v10"],
    ["Page layout view", "bg-[#cddaeb]", "M.5.5h12v12H.5zM3.500 2.500h6v8h-6zM5 5.500h3M5 7.500h3"],
    ["Page break view", "bg-[#cddaeb]", "M.5.5h12v12H.5zM3.500.5v7h3v-7M9.500.5v7H6"],
  ];
  return (
    <footer className="flex h-[21px] shrink-0 items-center bg-linear-to-b from-[#dceafc] via-[#c2daf8] via-50% to-[#b2cdf2] text-[#1e3a6e]">
      <span className="pl-[7px]">Ready</span>
      <span className="ml-[9px] h-4 w-px bg-[#8fb0de]" />
      <span className="ml-auto">Average: 4367.235294</span>
      <span className="ml-4">Count: 36</span>
      <span className="ml-4">Sum: 74243</span>
      <div className="ml-[9px] flex h-full w-[245px] items-center border-l border-[#8fb0de] bg-linear-to-b from-[#c2d8f5] to-[#9dbce6] pl-1">
        <div className="flex border border-[#8fa9cf]">
          {views.map(([l, bg, d]) => (
            <button key={l} aria-label={l} className={"flex h-4 w-[18px] items-center justify-center " + bg}>
              <svg width="13" height="13" viewBox="0 0 13 13"><path d={d} fill="#fdfdfd" stroke="#6c6a68" /></svg>
            </button>
          ))}
        </div>
        <span className="ml-2">100%</span>
        <div className="ml-2 mr-1 flex flex-1 items-center">
          <button aria-label="Zoom out"><svg width="17" height="17" viewBox="0 0 17 17"><circle cx="8.500" cy="8.500" r="7.200" fill="#e3ecf8" stroke="#5f779f" /><path d="M4.500 8.500h8" stroke="#3f516f" strokeWidth="2" /></svg></button>
          <svg className="h-4 min-w-0 flex-1" viewBox="0 0 102 16" role="slider" aria-label="Zoom" aria-valuenow={100}><path d="M0 7.500h102" stroke="#eaf2fc" /><path d="M0 8.500h102" stroke="#7391bd" /><path d="M46.500 2.500h8v8l-4 3.500-4-3.500z" fill="#dbe6f4" stroke="#55709c" /><path d="M50.500 4v5" stroke="#8ba1c3" /></svg>
          <button aria-label="Zoom in"><svg width="17" height="17" viewBox="0 0 17 17"><circle cx="8.500" cy="8.500" r="7.200" fill="#e3ecf8" stroke="#5f779f" /><path d="M4.500 8.500h8M8.500 4.500v8" stroke="#3f516f" strokeWidth="2" /></svg></button>
        </div>
      </div>
    </footer>
  );
}

function TrayIcons() {
  return (
    <svg width="130" height="18" viewBox="0 0 130 18" className="shrink-0">
      <path d="M3.500 2.500h13v10h-13z" fill="#8f8f8f" stroke="#555" />
      <path d="M2 14h5v3H2zM11 14h5v3h-5z" fill="#6d7f92" />
      <path d="M20 1h15v16H20z" fill="#101010" />
      <path d="M21 3.500h6M21 6.500h6M21 9.500h6M21 12.500h6M21 15.500h6" stroke="#b02020" strokeWidth="2" />
      <path d="M28 3.500h6M28 6.500h6M28 9.500h6M28 12.500h6M28 15.500h6" stroke="#1d7a2c" strokeWidth="2" />
      <path d="M38 1h15v16H38z" fill="#e87c1c" />
      <path d="M46 2c-3 3 2 3-1 6M48 4c-2 2 1 2-1 4M41 10h8c0 4-8 4-8 0zM49 10c3 0 2 3-1 2.500M40 15.500h10" stroke="#fff" fill="none" strokeWidth="1.200" />
      <circle cx="64" cy="9" r="7.500" fill="#3cb54a" stroke="#e8f3e8" />
      <path d="M60 9l3 4 5-8" stroke="#fff" strokeWidth="2.200" fill="none" />
      <path d="M74.500 4.500h8v7h-8z" fill="#9fd0ff" stroke="#dbe9f8" />
      <path d="M74 14h9v2h-9z" fill="#d5dfea" />
      <path d="M84 5q2 3 0 6M86.500 3.500q3 4.500 0 9M89 2q4 6 0 12" stroke="#51e33f" fill="none" strokeWidth="1.500" />
      <path d="M97.500 2.500h8v6h-8zM93.500 7.500h8v6h-8z" fill="#2c3f92" stroke="#c4cee0" />
      <path d="M100 9l7 7M107 9l-7 7" stroke="#e83a3a" strokeWidth="2.200" />
      <circle cx="117" cy="8" r="6" fill="#b9bfc9" stroke="#6b7480" />
      <circle cx="116" cy="7" r="3" fill="#4b525c" />
      <path d="M124 8q1 4-4 8" stroke="#dbe8f5" fill="none" />
    </svg>
  );
}

function Taskbar() {
  return (
    <footer className="flex h-[30px] shrink-0 items-stretch bg-linear-to-b from-[#4a8cf0] via-[#245edb] via-15% to-[#2157cf] text-white">
      <button className="flex w-[97px] items-center gap-[5px] rounded-r-xl bg-linear-to-b from-[#6fbf6a] via-[#3c9a3c] via-20% to-[#2f8430] pl-[10px] shadow-[inset_0_-2px_3px_#1f6120] drop-shadow-[2px_0_1px_#173f9c]">
        <svg width="19" height="18" viewBox="0 0 19 18">
          <path d="M3 2q3-2 6 0L7.500 8.500q-3-2-6 0z" fill="#e8562b" />
          <path d="M10 2.500q3 2 7 0L15 9q-3 1.500-6.500 0z" fill="#8ed14b" />
          <path d="M1.200 9.500q3-2 6 0L5.800 16q-3-2-5.800 0z" fill="#5a8ff0" />
          <path d="M8.200 10q3 2 6.500 0L13 16.500q-3 1.500-6.300 0z" fill="#fbd444" />
        </svg>
        <span className="pb-[2px] text-[16px] font-bold italic drop-shadow-[1px_1px_1px_#1c4d1d]">start</span>
      </button>
      <div className="flex w-[101px] shrink-0 items-center gap-[7px] pl-[13px]">
        <a href="#accessibility" aria-label="Accessibility"><svg width="15" height="15" viewBox="0 0 15 15"><path d="M.5.5h14v14H.5z" fill="#1d67c4" stroke="#a8d0ff" /><circle cx="7.500" cy="3.500" r="1.500" fill="#fff" /><path d="M7.500 5l5 8H9L7.500 9 6 13H2.500z" fill="#fff" /></svg></a>
        <a href="#browser" aria-label="Internet Explorer"><svg width="17" height="17" viewBox="0 0 17 17" fill="none"><path d="M13.500 11.500A5.500 5.500 0 1 1 14 8H4" stroke="#6cc6f8" strokeWidth="2.800" /><path d="M2 15.500C0 13 5 4 15.500 1.500c1 1 0 3-1 4" stroke="#f3c53f" strokeWidth="1.300" /></svg></a>
        <a href="#firefox" aria-label="Firefox"><svg width="17" height="17" viewBox="0 0 17 17"><circle cx="8.500" cy="8.500" r="7.500" fill="#e8701a" /><circle cx="9" cy="7" r="4.600" fill="#2a3f8f" /><path d="M1.500 5q2-3 4-2l3 3-2 2q2 3 6 1 3-2 2-6 3 4 0 8-4 4-9 2-5-3-4-8z" fill="#f6a02b" /></svg></a>
        <svg width="9" height="7" viewBox="0 0 9 7" className="mb-3 shrink-0" fill="none" stroke="#d3e3ff"><path d="M1 .5l3 3-3 3M5 .5l3 3-3 3" /></svg>
      </div>
      <button className="my-[3px] flex w-[160px] shrink-0 items-center gap-[5px] rounded-[3px] border border-[#173f9a] bg-[#1c4eb6] pl-[11px] shadow-[inset_1px_1px_2px_#12357f]">
        <svg width="14" height="14" viewBox="0 0 14 14"><path d="M.5.5h9l4 4v9H.5z" fill="#eaf6e6" stroke="#4e9a45" /><path d="M3 4l7 8M10 4l-7 8" stroke="#2d7d2a" strokeWidth="2.200" /></svg>
        <span className="whitespace-nowrap">Microsoft Excel - Book1</span>
      </button>
      <div className="ml-auto flex shrink-0 items-center">
        <svg width="13" height="13" viewBox="0 0 13 13"><path d="M2 2q2-2 4 0t4-1" stroke="#0a1c50" fill="none" /><path d="M.5 4.500h12v8H.5z" fill="#fff" stroke="#222" /><path d="M2 6.500h9M2 8.500h9M2 10.500h9" stroke="#222" strokeDasharray="1 1" /></svg>
        <div className="ml-2 mr-1 flex h-6 w-[104px] items-center border border-[#b7c9ea] bg-white pl-2 font-['Liberation_Serif',serif] text-[26px] leading-[30px]">
          <span className="text-[#c3cdf1]">G</span><span className="text-[#f3c3c3]">o</span><span className="text-[#f0e6b8]">o</span><span className="text-[#c3cdf1]">g</span><span className="text-[#c5e3c8]">l</span><span className="text-[#f3c3c3]">e</span>
        </div>
        <svg width="9" height="5" viewBox="0 0 9 5" className="mb-1"><path d="M0 0h9L4.500 5z" fill="#000b2d" /></svg>
        <svg width="9" height="9" viewBox="0 0 9 9" className="ml-2"><path d="M.5 1h8v7.500h-8z" fill="none" stroke="#000b2d" strokeWidth="1.600" /></svg>
      </div>
      <div className="ml-[20px] flex w-[202px] shrink-0 items-center border-l border-[#0b3fa8] bg-linear-to-b from-[#35b8f8] via-[#119bee] via-15% to-[#0f8ee6]">
        <button aria-label="Show hidden icons" className="-ml-2 shrink-0"><svg width="17" height="17" viewBox="0 0 17 17"><circle cx="8.500" cy="8.500" r="8" fill="#2a8ff0" stroke="#9fd4ff" strokeWidth=".8" /><path d="M10 4.500l-4 4 4 4" stroke="#fff" strokeWidth="2" fill="none" /></svg></button>
        <TrayIcons />
        <time className="ml-[6px]">8:29 PM</time>
      </div>
    </footer>
  );
}

export default function App() {
  return (
    <div className={"flex h-screen flex-col overflow-hidden bg-[#bfdbff] text-[11px] " + ui}>
      <TitleBar />
      <Tabs />
      <Ribbon />
      <FormulaBar />
      <div className="flex min-h-0 flex-1">
        <Sheet />
        <VScroll />
      </div>
      <SheetBar />
      <StatusBar />
      <Taskbar />
    </div>
  );
}
